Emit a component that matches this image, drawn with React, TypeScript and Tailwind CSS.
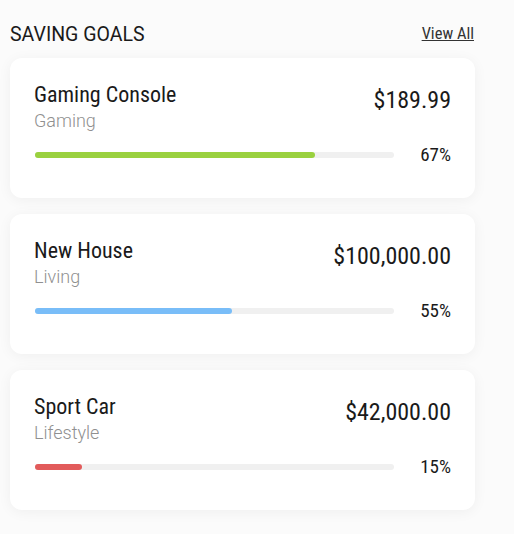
const goals = [
  { title: "Gaming Console", category: "Gaming", amount: "$189.99", percent: "67%", fill: "78%", color: "bg-[#9ad13f]" },
  { title: "New House", category: "Living", amount: "$100,000.00", percent: "55%", fill: "55%", color: "bg-[#79bdf8]" },
  { title: "Sport Car", category: "Lifestyle", amount: "$42,000.00", percent: "15%", fill: "13%", color: "bg-[#e25b5b]" },
];

const GoalCard = ({ goal }: { goal: (typeof goals)[number] }) => (
  <div className="bg-white rounded-xl shadow-[0_2px_14px_rgba(0,0,0,0.05)] h-[140px] pl-6 pr-6 pt-[24px]">
    <div className="flex justify-between items-start">
      <div>
        <p className="text-[22px] leading-[26px] font-[450] text-[#1a1a1a] [font-stretch:condensed]">
          {goal.title}
        </p>
        <p className="text-[18px] leading-[22px] mt-[2px] font-light text-[#909090]">{goal.category}</p>
      </div>
      <p className="text-[24px] leading-[28px] text-[#1a1a1a] mt-[4px] [font-stretch:condensed]">{goal.amount}</p>
    </div>
    <div className="flex items-center mt-[9px]">
      <div className="w-[359px] h-[6px] rounded-full bg-[#f0f0f0] ml-px">
        <div className={`h-full rounded-full ${goal.color}`} style={{ width: goal.fill }} />
      </div>
      <p className="ml-auto text-[19px] text-[#1a1a1a] [font-stretch:condensed]">{goal.percent}</p>
    </div>
  </div>
);

export default function App() {
  return (
    <div className="w-[514px] h-[534px] bg-[#fbfbfb] pt-[22px] pl-[10px] pr-[39px] font-['Roboto',sans-serif]">
      <div className="flex justify-between items-center h-[24px] mb-[12px]">
        <h2 className="text-[19.5px] text-[#1a1a1a] mt-[1px]">SAVING GOALS</h2>
        <a href="#" className="text-[16.5px] text-[#333] underline [font-stretch:condensed] mr-[1px]">
          View All
        </a>
      </div>
      <div className="flex flex-col gap-4">
        {goals.map((g) => (
          <GoalCard key={g.title} goal={g} />
        ))}
      </div>
    </div>
  );
}
